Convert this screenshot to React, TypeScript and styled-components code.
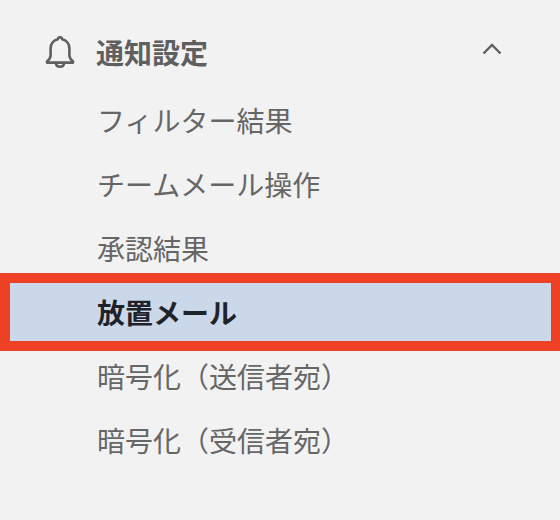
import { createGlobalStyle } from 'styled-components';
import styled from 'styled-components';

const items = [
  'フィルター結果',
  'チームメール操作',
  '承認結果',
  '放置メール',
  '暗号化（送信者宛）',
  '暗号化（受信者宛）',
];

const ACTIVE = '放置メール';

const App = () => {
  return (
    <>
      <GlobalStyle />
      <Sidebar>
        <Header>
          <BellIcon width={32} height={34} viewBox="0 0 32 34">
            <path d="M16 2.2c-1.2 0-2 .8-2.1 2C9.400 5.200 6.600 9 6.600 13.400v7.400c0 1.800-1.100 3.500-3.600 5.600v1.200h26v-1.200c-2.500-2.100-3.600-3.800-3.600-5.600v-7.400c0-4.400-2.800-8.200-7.300-9.200-.1-1.200-.9-2-2.100-2z" />
            <path d="M11.800 28c.3 2.300 2 3.800 4.200 3.800s3.900-1.500 4.200-3.800" />
          </BellIcon>
          <Title>通知設定</Title>
          <Chevron width={20} height={12} viewBox="0 0 20 12">
            <path d="M1.500 10.500 10 2l8.500 8.500" />
          </Chevron>
        </Header>
        <List>
          {items.map((name) => (
            <Item key={name} isActive={name === ACTIVE}>
              {name === ACTIVE && <Highlight />}
              <Label isActive={name === ACTIVE}>{name}</Label>
            </Item>
          ))}
        </List>
      </Sidebar>
    </>
  );
};

const GlobalStyle = createGlobalStyle`
  html, body {
    margin: 0;
    padding: 0;
    background: #f2f2f2;
  }
`;

const Sidebar = styled.div`
  width: 560px;
  height: 520px;
  padding-top: 20px;
  box-sizing: border-box;
  overflow: hidden;
  background: #f2f2f2;
  font-family: 'Noto Sans CJK JP', 'Noto Sans', sans-serif;
`;

const Header = styled.div`
  display: flex;
  align-items: center;
  height: 64px;
  padding: 0 58px 0 44px;
`;

const BellIcon = styled.svg`
  flex: none;
  fill: none;
  stroke: #5f5f5f;
  stroke-width: 2.6;
  stroke-linejoin: round;
  stroke-linecap: round;
`;

const Title = styled.div`
  flex: 1;
  margin-left: 20px;
  font-size: 28px;
  font-weight: 700;
  color: #5f5f5f;
`;

const Chevron = styled.svg`
  flex: none;
  fill: none;
  stroke: #5f5f5f;
  stroke-width: 2.4;
  margin-top: -6px;
`;

const List = styled.ul`
  list-style: none;
  margin: 4px 0 0;
  padding: 0;
`;

const Item = styled.li<{ isActive: boolean }>`
  position: relative;
  display: flex;
  align-items: center;
  height: 64px;
  padding-left: 97px;
`;

const Highlight = styled.div`
  position: absolute;
  top: -7px;
  right: 0;
  bottom: -7px;
  left: 0;
  box-sizing: border-box;
  border: 10px solid #ee4024;
  border-right-width: 9px;
  background: #cbd8ea;
`;

const Label = styled.span<{ isActive: boolean }>`
  position: relative;
  font-size: 28px;
  font-weight: ${({ isActive }) => (isActive ? 700 : 400)};
  color: ${({ isActive }) => (isActive ? '#1f2329' : '#666666')};
`;

export default App;
